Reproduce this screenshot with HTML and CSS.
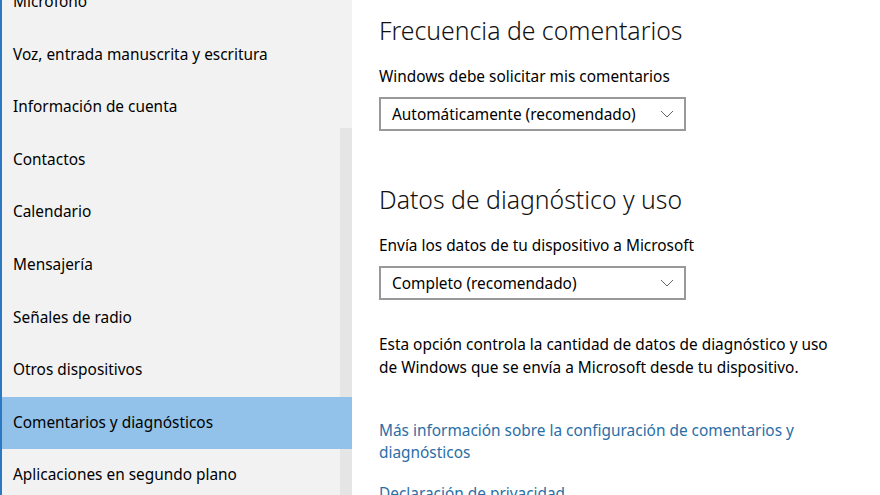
FILE: index.html
```html
<!DOCTYPE html>
<html lang="es">
<head>
    <meta charset="UTF-8">
    <title>Privacidad - Comentarios y diagnósticos</title>
    <link rel="stylesheet" href="styles.css">
</head>
<body>
    <div class="window">
        <div class="sidebar">
            <ul class="nav">
                <li class="nav-item first">Micrófono</li>
                <li class="nav-item">Voz, entrada manuscrita y escritura</li>
                <li class="nav-item">Información de cuenta</li>
                <li class="nav-item">Contactos</li>
                <li class="nav-item">Calendario</li>
                <li class="nav-item">Mensajería</li>
                <li class="nav-item">Señales de radio</li>
                <li class="nav-item">Otros dispositivos</li>
                <li class="nav-item selected">Comentarios y diagnósticos</li>
                <li class="nav-item">Aplicaciones en segundo plano</li>
            </ul>
            <div class="scroll-track"></div>
        </div>

        <div class="content">
            <h2>Frecuencia de comentarios</h2>
            <p class="field-label">Windows debe solicitar mis comentarios</p>
            <div class="dropdown">
                <span>Automáticamente (recomendado)</span>
                <svg class="chevron" width="14" height="8" viewBox="0 0 14 8"><path d="M1 1 L7 7 L13 1" fill="none" stroke="#666" stroke-width="1"/></svg>
            </div>

            <h2 class="second">Datos de diagnóstico y uso</h2>
            <p class="field-label">Envía los datos de tu dispositivo a Microsoft</p>
            <div class="dropdown">
                <span>Completo (recomendado)</span>
                <svg class="chevron" width="14" height="8" viewBox="0 0 14 8"><path d="M1 1 L7 7 L13 1" fill="none" stroke="#666" stroke-width="1"/></svg>
            </div>

            <p class="desc">Esta opción controla la cantidad de datos de diagnóstico y uso de Windows que se envía a Microsoft desde tu dispositivo.</p>

            <a class="link" href="#">Más información sobre la configuración de comentarios y diagnósticos</a>
            <a class="link" href="#">Declaración de privacidad</a>
        </div>
    </div>
</body>
</html>
```

FILE: styles.css
```css
html, body {
    margin: 0;
    height: 100%;
    overflow: hidden;
}
body {
    font-family: "Noto Sans", "Open Sans", sans-serif;
    font-size: 15.4px;
    color: #000;
    background: #fff;
}
.window {
    display: flex;
    height: 495px;
    overflow: hidden;
    border-left: 2px solid #2b79c2;
}
.sidebar {
    width: 350px;
    background: #f2f2f2;
    position: relative;
    flex-shrink: 0;
}
.nav {
    list-style: none;
    margin: 0;
    padding: 0;
    margin-top: -24px;
    position: relative;
    z-index: 1;
}
.nav-item {
    height: 52.6px;
    line-height: 52.6px;
    padding-left: 11px;
    white-space: nowrap;
}
.nav-item.selected {
    background: #92c1e9;
}
.scroll-track {
    position: absolute;
    right: 0;
    top: 128px;
    bottom: 0;
    width: 12px;
    background: #e5e5e5;
}
.content {
    flex: 1;
    padding: 14px 0 0 27px;
}
h2 {
    font-weight: 300;
    font-size: 24.8px;
    margin: 0;
    line-height: 32px;
    color: #111;
}
h2.second {
    margin-top: 52px;
}
.field-label {
    margin: 21px 0 0;
    line-height: 20px;
}
.dropdown {
    box-sizing: border-box;
    width: 307px;
    height: 34px;
    margin-top: 10px;
    border: 2px solid #999;
    display: flex;
    align-items: center;
    justify-content: space-between;
    padding: 0 10px 0 11px;
}
.chevron {
    display: block;
}
.desc {
    width: 452px;
    margin: 32.5px 0 0;
    line-height: 23px;
}
.link {
    display: block;
    width: 445px;
    color: #2a6ea6;
    text-decoration: none;
    line-height: 22px;
    margin-top: 41.5px;
}
.link + .link {
    margin-top: 19px;
}
```
